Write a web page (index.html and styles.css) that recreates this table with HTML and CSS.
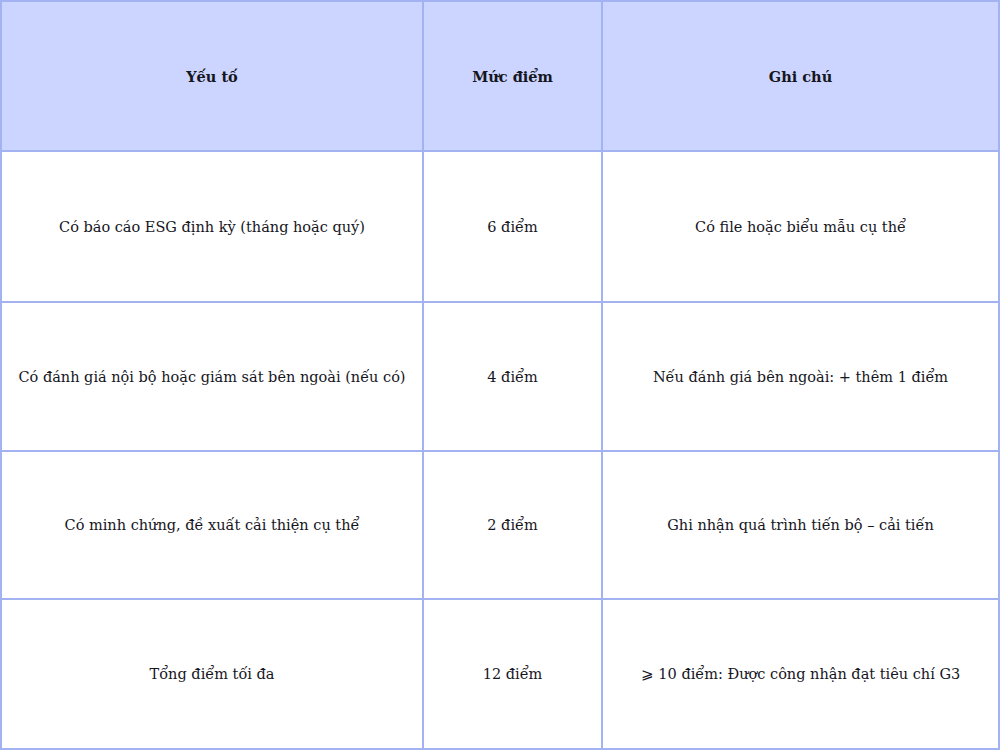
FILE: index.html
```html
<!DOCTYPE html>
<html lang="vi">
<head>
<meta charset="utf-8">
<link rel="stylesheet" href="styles.css">
</head>
<body>
<table class="grid">
  <colgroup>
    <col class="c1"><col class="c2"><col class="c3">
  </colgroup>
  <thead>
    <tr class="head">
      <th>Yếu tố</th>
      <th>Mức điểm</th>
      <th>Ghi chú</th>
    </tr>
  </thead>
  <tbody>
    <tr class="r1">
      <td>Có báo cáo ESG định kỳ (tháng hoặc quý)</td>
      <td>6 điểm</td>
      <td>Có file hoặc biểu mẫu cụ thể</td>
    </tr>
    <tr class="r2">
      <td>Có đánh giá nội bộ hoặc giám sát bên ngoài (nếu có)</td>
      <td>4 điểm</td>
      <td>Nếu đánh giá bên ngoài: + thêm 1 điểm</td>
    </tr>
    <tr class="r3">
      <td>Có minh chứng, đề xuất cải thiện cụ thể</td>
      <td>2 điểm</td>
      <td>Ghi nhận quá trình tiến bộ – cải tiến</td>
    </tr>
    <tr class="r4">
      <td>Tổng điểm tối đa</td>
      <td>12 điểm</td>
      <td>⩾ 10 điểm: Được công nhận đạt tiêu chí G3</td>
    </tr>
  </tbody>
</table>
</body>
</html>
```
FILE: styles.css
```css
html, body {
  margin: 0;
  padding: 0;
  background: #ffffff;
}
.grid {
  width: 1000px;
  border-collapse: separate;
  border-spacing: 0;
  border-top: 2px solid #a3b3f2;
  border-left: 2px solid #a3b3f2;
  table-layout: fixed;
  font-family: "DejaVu Serif", "Liberation Serif", serif;
  font-size: 14.5px;
  color: #16161e;
}
.c1 { width: 422px; }
.c2 { width: 179px; }
.c3 { width: 397px; }
.grid th,
.grid td {
  border-right: 2px solid #a3b3f2;
  border-bottom: 2px solid #a3b3f2;
  text-align: center;
  vertical-align: middle;
  padding: 0 8px;
}
.head th {
  background: #ccd5ff;
  font-weight: bold;
  height: 148px;
}
.r1 td { height: 149px; }
.r2 td { height: 147px; }
.r3 td { height: 146px; }
.r4 td { height: 148px; }
```
